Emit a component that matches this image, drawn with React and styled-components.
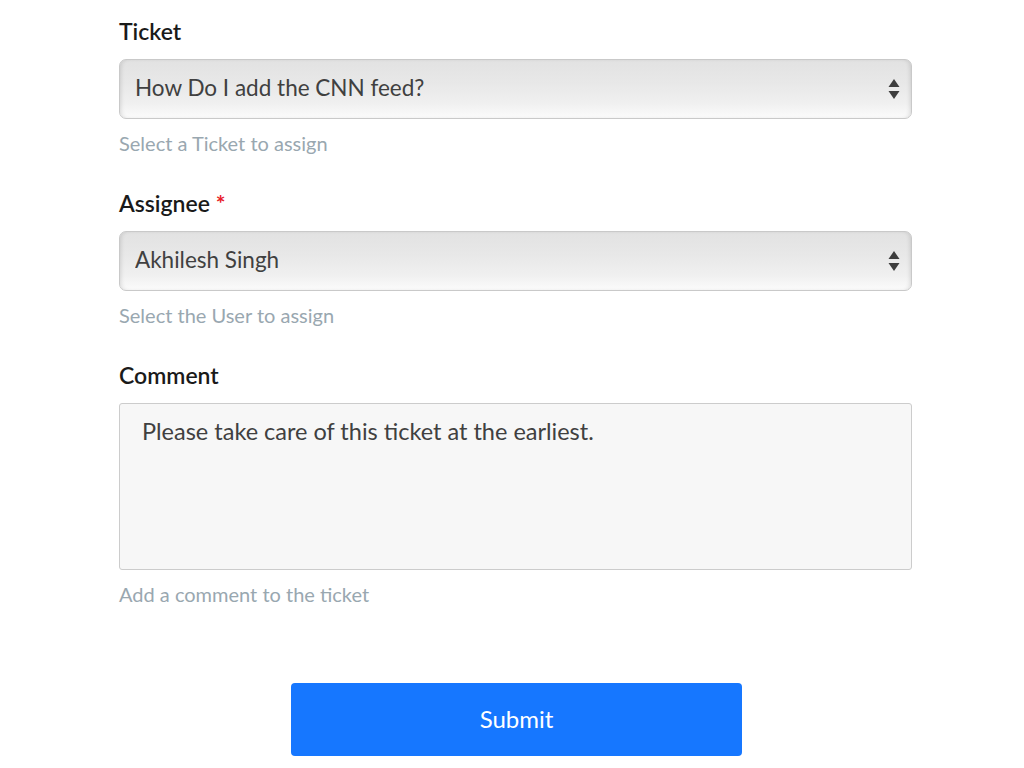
import React from 'react';
import styled, { createGlobalStyle } from 'styled-components';

const GlobalStyle = createGlobalStyle`
  html, body {
    margin: 0;
    padding: 0;
    background: #ffffff;
  }
  body {
    font-family: Lato, "Open Sans", sans-serif;
  }
`;

const tickets = ['How Do I add the CNN feed?'];
const users = ['Akhilesh Singh'];

const App = () => {
  return (
    <Page>
      <GlobalStyle />
      <Form onSubmit={e => e.preventDefault()}>
        <Field>
          <Label>Ticket</Label>
          <SelectWrap>
            <Select defaultValue={tickets[0]}>
              {tickets.map(t => (
                <option key={t}>{t}</option>
              ))}
            </Select>
            <Arrows />
          </SelectWrap>
          <Help>Select a Ticket to assign</Help>
        </Field>

        <Field>
          <Label>
            Assignee <Required>*</Required>
          </Label>
          <SelectWrap>
            <Select defaultValue={users[0]}>
              {users.map(u => (
                <option key={u}>{u}</option>
              ))}
            </Select>
            <Arrows />
          </SelectWrap>
          <Help>Select the User to assign</Help>
        </Field>

        <Field>
          <Label>Comment</Label>
          <TextArea defaultValue="Please take care of this ticket at the earliest." />
          <Help>Add a comment to the ticket</Help>
        </Field>

        <Actions>
          <Button type="submit">Submit</Button>
        </Actions>
      </Form>
    </Page>
  );
};

const Arrows = () => (
  <ArrowIcon width="12" height="22" viewBox="0 0 12 22">
    <path d="M6 1 L11.5 9 L0.5 9 Z" fill="#3d3d3d" />
    <path d="M6 21 L11.5 13 L0.5 13 Z" fill="#3d3d3d" />
  </ArrowIcon>
);

export default App;

const Page = styled.div`
  padding: 15px 0 0 119px;
`;

const Form = styled.form`
  width: 793px;
  display: flex;
  flex-direction: column;
`;

const Field = styled.div`
  display: flex;
  flex-direction: column;
  margin-bottom: 31px;
`;

const Label = styled.label`
  font-size: 23px;
  font-weight: 600;
  color: #1a1a1a;
  line-height: 32px;
  margin-bottom: 12px;
`;

const Required = styled.span`
  color: #e8202a;
  font-weight: 700;
`;

const SelectWrap = styled.div`
  position: relative;
  display: flex;
`;

const Select = styled.select`
  appearance: none;
  -webkit-appearance: none;
  width: 100%;
  height: 60px;
  padding: 0 40px 4px 15px;
  font-family: inherit;
  font-size: 22.5px;
  color: #404040;
  border: 1px solid #c9c9c9;
  border-radius: 7px;
  background: linear-gradient(
    to bottom,
    #e2e2e2 0%,
    #e8e8e8 40%,
    #f0f0f0 75%,
    #fbfbfb 100%
  );
  box-shadow: inset 3px 0 4px -2px rgba(0, 0, 0, 0.12),
    inset -3px 0 4px -2px rgba(0, 0, 0, 0.12);
  outline: none;
`;

const ArrowIcon = styled.svg`
  position: absolute;
  right: 12px;
  top: 19px;
  pointer-events: none;
`;

const Help = styled.div`
  font-size: 20px;
  color: #99a7b0;
  line-height: 26px;
  margin-top: 11px;
`;

const TextArea = styled.textarea`
  height: 167px;
  box-sizing: border-box;
  padding: 12px 22px;
  font-family: inherit;
  font-size: 23.5px;
  line-height: 30px;
  color: #404040;
  background: #f7f7f7;
  border: 1px solid #cccccc;
  border-radius: 3px;
  resize: none;
  outline: none;
`;

const Actions = styled.div`
  display: flex;
  justify-content: center;
  padding: 45px 0 0 2px;
`;

const Button = styled.button`
  width: 451px;
  height: 73px;
  padding: 0 0 3px;
  background: #1677ff;
  color: #ffffff;
  border: none;
  border-radius: 4px;
  font-family: inherit;
  font-size: 24px;
  cursor: pointer;
`;
